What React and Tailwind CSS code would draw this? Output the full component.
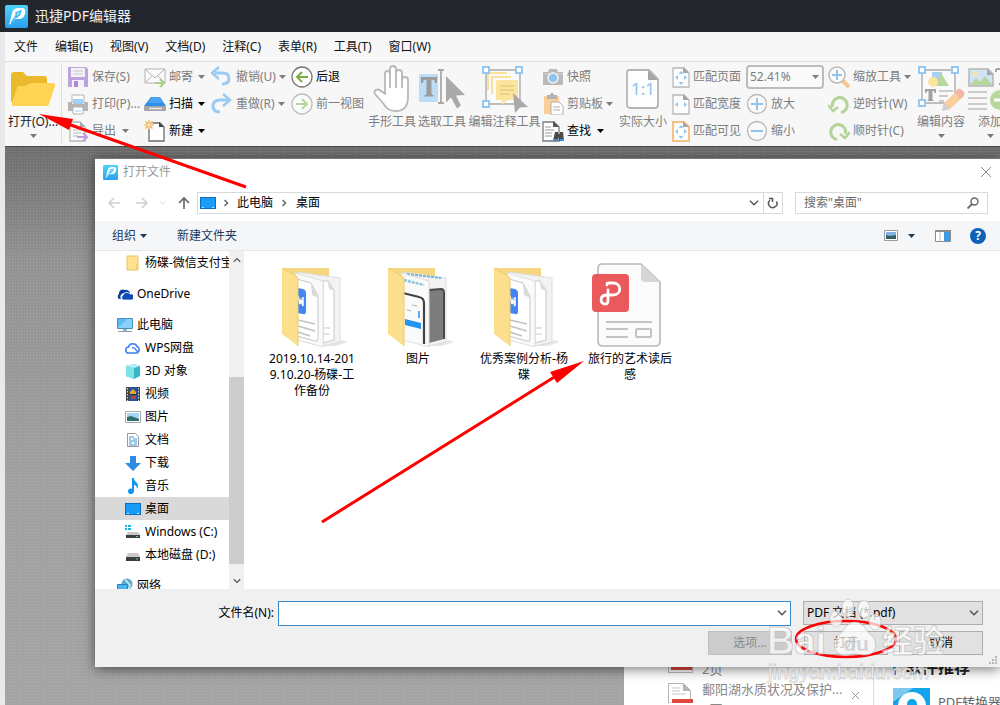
import React from "react";

const Caret = ({ className = "" }) => (
  <svg className={`shrink-0 ${className}`} width="7" height="4" viewBox="0 0 7 4" aria-hidden="true">
    <path d="M0 0h7L3.500 4z" fill="currentColor" />
  </svg>
);

const Chevron = ({ className = "" }) => (
  <svg className={className} width="10" height="6" viewBox="0 0 10 6" fill="none" stroke="currentColor" strokeWidth="1.5" aria-hidden="true">
    <path d="M1 .8l4 4 4-4" />
  </svg>
);

const Svg = ({ w = 22, h = 22, children }) => (
  <svg className="shrink-0" width={w} height={h} viewBox={`0 0 ${w} ${h}`} fill="none" aria-hidden="true">
    {children}
  </svg>
);

/* ---------- toolbar icons ---------- */

const LogoIcon = ({ size = 23 }) => (
  <svg className="shrink-0" width={size} height={size} viewBox="0 0 23 23" aria-hidden="true">
    <defs>
      <linearGradient id="logo" x1="0" y1="0" x2="0" y2="1">
        <stop offset="0" stopColor="#4fd3f7" />
        <stop offset="1" stopColor="#2a9ff0" />
      </linearGradient>
    </defs>
    <rect width="23" height="23" rx="2" fill="url(#logo)" />
    <path d="M4 20L7 8c1-3.500 3-5 6-5h3c4 0 5 2 4 5.500-1 4-3 5.500-6.500 5.500H10c-1.500 0-1.500 3-6 6z" fill="#fff" />
    <path d="M6 18l6-9M11 7.500l5-1.500-1.500 4-3.500 2.500z" stroke="#35b4f3" strokeWidth="1.200" fill="#9adff9" />
  </svg>
);

const OpenFolder = () => (
  <Svg w={46} h={38}>
    <path d="M1 5a3 3 0 013-3h9l4 4h17a3 3 0 013 3v24H4a3 3 0 01-3-3z" fill="#ebb92c" />
    <path d="M9 16h6l6-3h22c2 0 2.500 1 2 3l-6 18c-.5 1.500-1 2-3 2H4c-2 0-2.500-1-2-3l5-15c.5-1.500 1-2 2-2z" fill="#ffd454" />
  </Svg>
);

const SaveIcon = () => (
  <Svg>
    <path d="M1 1h18l2 2v18H1z" fill="#bda3de" />
    <path d="M4 2h14v9H4zM5 14h12v7H5z" fill="#f5f2fa" />
    <path d="M6 5h10M6 8h10" stroke="#c9c9c9" />
    <path d="M7 15h4v6H7z" fill="#a98ad1" />
  </Svg>
);

const PrintIcon = () => (
  <Svg>
    <path d="M5 2h12v7H5z" fill="#fff" stroke="#b4b4b4" />
    <path d="M6 6h10v5H6z" fill="#9fd0f5" />
    <path d="M1 9h4v2h12V9h4v9H1z" fill="#b5b5b5" />
    <path d="M6 14h10v7H6z" fill="#fff" stroke="#b4b4b4" />
    <path d="M8 18h6" stroke="#9fd0f5" />
  </Svg>
);

const ExportIcon = () => (
  <Svg>
    <path d="M3 2h10l5 5v14H3z" fill="#fbfbfb" stroke="#b8b8b8" strokeWidth="1.300" />
    <path d="M13 2v5h5z" fill="#a5a5a5" />
    <path d="M6 10h8M6 13h8M6 16h5" stroke="#b8b8b8" />
    <path d="M10 17h10m-4-4l4 4-4 4" stroke="#b99fdb" strokeWidth="2" />
  </Svg>
);

const MailIcon = () => (
  <Svg>
    <path d="M1 3h20v14H1z" fill="#fafafa" stroke="#b3b3b3" />
    <path d="M1 3l10 9L21 3M1 17l7-7M21 17l-7-7" stroke="#b3b3b3" />
    <path d="M11 17h9m-4-4l4 4-4 4" stroke="#a9d18e" strokeWidth="2" />
  </Svg>
);

const ScanIcon = () => (
  <Svg>
    <path d="M7 4h9l6 9H0z" fill="#2f8ee6" />
    <path d="M8 4h7l4 6H4z" fill="#49a6f5" />
    <rect x="0" y="13" width="22" height="5" rx="1" fill="#a5a5a5" />
    <path d="M5 15.500h13" stroke="#e9e9e9" strokeWidth="1.500" />
  </Svg>
);

const NewIcon = () => (
  <Svg>
    <path d="M5 3h11l4 4v14H5z" fill="#fff" stroke="#6b6b6b" strokeWidth="1.300" />
    <path d="M15 2l5 5h-5z" fill="#444" />
    <circle cx="5" cy="5" r="4" fill="#f7f7f7" />
    <path d="M5 0v10M0 5h10M1.500 1.500l7 7M8.500 1.500l-7 7" stroke="#f3a93b" strokeWidth="1.200" />
    <circle cx="5" cy="5" r="1.500" fill="#f7f7f7" />
  </Svg>
);

const UndoIcon = () => (
  <Svg>
    <path d="M4 7h8q6 0 6 5.500T11 18" stroke="#9ccbf2" strokeWidth="3" />
    <path d="M8 1L1 7l7 6" stroke="#9ccbf2" strokeWidth="2.600" />
  </Svg>
);

const RedoIcon = () => (
  <Svg>
    <path d="M17 7H9q-7 0-7 6t7 6" stroke="#9ccbf2" strokeWidth="3" />
    <path d="M12 1l7 6-7 6" stroke="#9ccbf2" strokeWidth="2.600" />
  </Svg>
);

const BackIcon = () => (
  <Svg>
    <circle cx="11" cy="11" r="10" fill="#fff" stroke="#787878" strokeWidth="1.300" />
    <path d="M17 11H7m4-5l-5 5 5 5" stroke="#76b043" strokeWidth="2" />
  </Svg>
);

const ForwardIcon = () => (
  <Svg>
    <circle cx="11" cy="11" r="10" fill="#fbfbfb" stroke="#bdbdbd" strokeWidth="1.300" />
    <path d="M5 11h10m-4-5l5 5-5 5" stroke="#b5d69a" strokeWidth="2" />
  </Svg>
);

const HandIcon = () => (
  <Svg w={38} h={48}>
    <path
      d="M12 29V9c0-4 5-4 5 0V4c0-4 6-4 6 0v4c0-4 6-4 6 0v7c0-4 6-4 6 0v17c0 10-4 14-12 14-7 0-10-3-13-8L2 29c-2-4 3-6 6-3z"
      fill="#fff" stroke="#b8b8b8" strokeWidth="1.800" strokeLinejoin="round"
    />
    <path d="M17 8v15M23 6v17M29 9v14" stroke="#b8b8b8" strokeWidth="1.800" />
  </Svg>
);

const SelectToolIcon = () => (
  <Svg w={48} h={42}>
    <rect x="1" y="6" width="19" height="28" rx="1" fill="#bddcf5" />
    <path d="M3 9h16v6h-2c0-2.500-1-3.500-3.500-3.500V25c0 1.500.5 2 2 2v1.500h-9V27c1.500 0 2-.5 2-2V11.500C6 11.500 5 12.500 5 15H3z" fill="#9b9b9b" />
    <path d="M20 2h6M20 35h6M23 2v33" stroke="#a8a8a8" strokeWidth="1.800" />
    <path d="M28 8l19 19-9 .5 5 10-4 3-6-11-5 5z" fill="#a9a9a9" />
  </Svg>
);

const CommentToolIcon = () => (
  <Svg w={48} h={48}>
    <path d="M5 5h34v34H5z" fill="#fafafa" stroke="#bdbdbd" strokeWidth="1.800" />
    <path d="M7 25V8h19M11 29V12h19" stroke="#fbe09b" strokeWidth="2" />
    <path d="M15 15h22v20H26l-5 5v-5h-6z" fill="#fbe3a0" />
    <path d="M19 21h14M19 25h14M19 29h10" stroke="#e3bf66" />
    <path d="M2 2h6v6H2zM35 2h6v6h-6zM2 36h6v6H2z" fill="#fff" stroke="#93c8f2" strokeWidth="2" />
    <path d="M32 28l15 14-8 .5-5 5.500z" fill="#a9a9a9" />
  </Svg>
);

const CameraIcon = () => (
  <Svg>
    <path d="M1 6h5l1-3h8l1 3h5v13H1z" fill="#b9b9b9" />
    <path d="M1 8h20" stroke="#d6d6d6" />
    <circle cx="11" cy="12" r="5" fill="#8fc4f0" stroke="#f3f3f3" strokeWidth="1.500" />
  </Svg>
);

const ClipboardIcon = () => (
  <Svg>
    <path d="M2 3h15v18H2z" fill="#f9cf97" />
    <path d="M5 2h3a2 2 0 014 0h3v4H5z" fill="#b3b3b3" />
    <path d="M9 9h8l4 4v9H9z" fill="#fdfdfd" stroke="#b3b3b3" />
    <path d="M11 14h7M11 17h7" stroke="#b3b3b3" />
  </Svg>
);

const FindIcon = () => (
  <Svg>
    <path d="M1 2h11l5 5v14H1z" fill="#fff" stroke="#7a7a7a" strokeWidth="1.300" />
    <path d="M11 1l6 6h-6z" fill="#555" />
    <path d="M3 7h6M3 10h9M3 13h7M3 16h7" stroke="#9a9a9a" />
    <path d="M13 12h3v2h2v-2h3l1 9h-5v-3h-1v3h-5z" fill="#4a4a4a" />
    <path d="M11 20h5M18 20h4" stroke="#3b8ed8" strokeWidth="2" />
  </Svg>
);

const ActualSizeIcon = () => (
  <Svg w={34} h={42}>
    <path d="M3 2h20l9 9v26a3 3 0 01-3 3H4a3 3 0 01-3-3V4a2 2 0 012-2z" fill="#fdfdfd" stroke="#b5b5b5" strokeWidth="1.800" />
    <path d="M22 2l10 10H22z" fill="#a5a5a5" />
    <text x="17" y="27" textAnchor="middle" fontSize="17" fontFamily="Noto Sans" fill="#8ec3ee">1:1</text>
  </Svg>
);

const FitIcon = ({ kind }) => (
  <Svg w={18} h={22}>
    <path d="M1 2h11l5 5v14H1z" fill="#fdfdfd" stroke={kind === "visible" ? "#f5c283" : "#b8b8b8"} strokeWidth={kind === "visible" ? 2 : 1.3} />
    <path d="M11 1l6 6h-6z" fill="#a5a5a5" />
    <path d="M6 9l-3 2.500L6 14zM12 9l3 2.500-3 2.500z" fill="#93c8f2" />
    {kind !== "width" && <path d="M6.500 8L9 5l2.500 3zM6.500 16L9 19l2.500-3z" fill="#93c8f2" />}
  </Svg>
);

const PlusMinus = ({ plus }) => (
  <Svg>
    <circle cx="11" cy="11" r="9.500" fill="#f9f9f9" stroke="#b9b9b9" strokeWidth="1.300" />
    <path d={plus ? "M5 11h12M11 5v12" : "M5 11h12"} stroke="#93c3ea" strokeWidth="2" />
  </Svg>
);

const ZoomToolIcon = () => (
  <Svg>
    <path d="M15 15l6 6" stroke="#f7c88c" strokeWidth="4" />
    <circle cx="9" cy="9" r="8" fill="#fbfbfb" stroke="#b9b9b9" strokeWidth="1.500" />
    <path d="M4 9h10M9 4v10" stroke="#93c3ea" strokeWidth="2" />
  </Svg>
);

const RotateIcon = ({ flip }) => (
  <Svg>
    <g transform={flip ? "translate(22 0) scale(-1 1)" : undefined}>
      <path d="M13 19.500a7.500 7.500 0 10-8.500-5.500" stroke="#b3d496" strokeWidth="3" />
      <path d="M0 12l5 6 5-4" stroke="#b3d496" strokeWidth="2.600" />
    </g>
  </Svg>
);

const EditContentIcon = () => (
  <Svg w={48} h={48}>
    <path d="M5 5h33v33H5z" fill="#fafafa" stroke="#bdbdbd" strokeWidth="1.800" />
    <path d="M15 7h10v11H15z" fill="#a9d1f2" />
    <path d="M24 8l8 13H18z" fill="#b7d79c" />
    <circle cx="16" cy="17" r="5" fill="#fbe3a0" />
    <path d="M8 24h11v4h-1.500c0-1.500-.5-2-2-2v8c0 1 .5 1.500 1.500 1.500v.5h-7v-.500c1 0 1.500-.5 1.500-1.500v-8c-1.500 0-2 .5-2 2H8z" fill="#a2a2a2" />
    <path d="M22 26h14M22 31h9M22 36h5" stroke="#bdbdbd" strokeWidth="1.500" />
    <path d="M2 2h6v6H2zM35 2h6v6h-6zM2 35h6v6H2z" fill="#fff" stroke="#93c8f2" strokeWidth="2" />
    <path d="M25 46l2-8 14-13 6 6-14 13z" fill="#f8cf9d" />
    <path d="M38 27l3-3q2-1 4 1l2 2q1 2-.5 4L43 34z" fill="#f4b3a6" />
    <path d="M25 46l2-8 6 6z" fill="#cfcfcf" />
  </Svg>
);

const AddIcon = () => (
  <Svg w={44} h={44}>
    <path d="M1 2h19l5 5v12H1z" fill="#cfe5f6" stroke="#b5b5b5" strokeWidth="1.500" />
    <path d="M2 18l6-7 4 4 5-6 7 9z" fill="#b7d79c" />
    <circle cx="7" cy="7" r="2.500" fill="#fbe3a0" />
    <path d="M19 2l6 6h-6z" fill="#a5a5a5" />
    <path d="M28 2h10M28 2v3M31 17h6" stroke="#a5a5a5" strokeWidth="2" />
    <path d="M0 25h19M0 31h19M0 37h19M0 42h19" stroke="#bdbdbd" strokeWidth="1.500" />
    <circle cx="32" cy="33" r="10" fill="#b7d79c" />
    <path d="M26 33h12" stroke="#fff" strokeWidth="3" />
  </Svg>
);

function Tool({ icon, label, caret, near, active }) {
  return (
    <button
      type="button"
      className={`flex h-[27px] w-full items-center gap-[3px] text-left whitespace-nowrap ${active ? "text-black" : "text-[#7d7d7d]"}`}
    >
      {icon}
      <span>{label}</span>
      {caret && <Caret className={near ? "ml-[3px]" : "mr-[6px] ml-auto"} />}
    </button>
  );
}

function BigTool({ icon, label, caret, active, className }) {
  return (
    <button
      type="button"
      className={`flex shrink-0 flex-col items-center whitespace-nowrap ${active ? "text-[#222]" : "text-[#7d7d7d]"} ${className}`}
    >
      <span className="flex h-[51px] items-center">{icon}</span>
      <span className="leading-4">{label}</span>
      {caret && <Caret className="mt-1 text-[#777]" />}
    </button>
  );
}

const Column = ({ className, children }) => <div className={`flex shrink-0 flex-col ${className}`}>{children}</div>;

const menus = ["文件", "编辑(E)", "视图(V)", "文档(D)", "注释(C)", "表单(R)", "工具(T)", "窗口(W)"];

function Toolbar() {
  return (
    <div className="flex h-[85px] overflow-hidden border-b border-[#4a4a4a] bg-[#f7f7f7] pt-px">
      <div className="mb-[3px] flex shrink-0 border-r border-[#dedede]">
        <BigTool active caret className="w-14" icon={<OpenFolder />} label="打开(O)..." />
      </div>
      <Column className="w-[82px] pl-[5px]">
        <Tool icon={<SaveIcon />} label="保存(S)" />
        <Tool icon={<PrintIcon />} label="打印(P)..." />
        <Tool icon={<ExportIcon />} label="导出" caret near />
      </Column>
      <Column className="w-[67px]">
        <Tool icon={<MailIcon />} label="邮寄" caret />
        <Tool active icon={<ScanIcon />} label="扫描" caret />
        <Tool active icon={<NewIcon />} label="新建" caret />
      </Column>
      <Column className="w-[80px]">
        <Tool icon={<UndoIcon />} label="撤销(U)" caret />
        <Tool icon={<RedoIcon />} label="重做(R)" caret />
      </Column>
      <Column className="w-[76px]">
        <Tool active icon={<BackIcon />} label="后退" />
        <Tool icon={<ForwardIcon />} label="前一视图" />
      </Column>
      <BigTool className="w-[50px]" icon={<HandIcon />} label="手形工具" />
      <BigTool className="w-[50px]" icon={<SelectToolIcon />} label="选取工具" />
      <BigTool className="w-[75px]" icon={<CommentToolIcon />} label="编辑注释工具" />
      <Column className="w-[76px]">
        <Tool icon={<CameraIcon />} label="快照" />
        <Tool icon={<ClipboardIcon />} label="剪贴板" caret />
        <Tool active icon={<FindIcon />} label="查找" caret near />
      </Column>
      <BigTool className="w-[50px]" icon={<ActualSizeIcon />} label="实际大小" />
      <Column className="w-[78px] pl-1">
        <Tool icon={<FitIcon kind="page" />} label="匹配页面" />
        <Tool icon={<FitIcon kind="width" />} label="匹配宽度" />
        <Tool icon={<FitIcon kind="visible" />} label="匹配可见" />
      </Column>
      <Column className="w-[82px]">
        <label className="relative flex h-[27px] w-[78px] items-center text-[#7d7d7d]">
          <select aria-label="缩放比例" className="h-6 w-full appearance-none rounded-sm border-2 border-[#bcbcbc] bg-[#fafafa] pl-[2px]">
            <option>52.41%</option>
          </select>
          <Caret className="pointer-events-none absolute right-[5px]" />
        </label>
        <Tool icon={<PlusMinus plus />} label="放大" />
        <Tool icon={<PlusMinus />} label="缩小" />
      </Column>
      <Column className="w-[88px]">
        <Tool icon={<ZoomToolIcon />} label="缩放工具" caret />
        <Tool icon={<RotateIcon />} label="逆时针(W)" />
        <Tool icon={<RotateIcon flip />} label="顺时针(C)" />
      </Column>
      <BigTool caret className="w-[50px]" icon={<EditContentIcon />} label="编辑内容" />
      <BigTool caret className="w-12" icon={<AddIcon />} label="添加" />
    </div>
  );
}

/* ---------- dialog icons ---------- */

const DesktopIcon = () => (
  <Svg w={16} h={14}>
    <rect x=".5" y="1.500" width="15" height="11" fill="#1a9bf7" stroke="#0c6fc0" />
    <path d="M2 11.500h2M12 11.500h2" stroke="#bfe4ff" />
  </Svg>
);

const treeIcons = {
  folder: (
    <Svg w={16} h={16}>
      <path d="M2 1h11v14H2z" fill="#ffe293" stroke="#e9c45c" />
      <path d="M11 9h2v6h-2z" fill="#f4d06b" />
    </Svg>
  ),
  onedrive: (
    <Svg w={16} h={16}>
      <path d="M2 13a3 3 0 010-5 4 4 0 016-4 4 4 0 015 3H8a4 4 0 00-4 6z" fill="#0b3f9e" />
      <path d="M6 14a3 3 0 010-5 4 4 0 017-1 3 3 0 012 6z" fill="#1149b5" stroke="#fff" strokeWidth=".8" />
    </Svg>
  ),
  pc: (
    <Svg w={16} h={16}>
      <path d="M.5 1.500h15v10H.5z" fill="#5cbcf2" stroke="#4b90bd" />
      <path d="M1 11l9-9h5v9z" fill="#86d2fa" />
      <path d="M6 12h4v2H6z" fill="#9db4c3" />
      <path d="M1 14.500h14" stroke="#8aa2b3" />
    </Svg>
  ),
  cloud: (
    <Svg w={16} h={16}>
      <path d="M4 13a3 3 0 01-.5-6 4.500 4.500 0 018.500-.5A3.500 3.500 0 0112 13H4" stroke="#3a7ff2" strokeWidth="1.600" />
      <path d="M7 8c2-1 3 0 4 2l2 2" stroke="#3a7ff2" strokeWidth="1.400" />
    </Svg>
  ),
  cube: (
    <Svg w={16} h={16}>
      <path d="M1 3l8-2 6 2v10l-6 3-8-3z" fill="#37b6c9" />
      <path d="M1 3l8 2v11l-8-3z" fill="#7fe3e8" />
      <path d="M1 3l8-2 6 2-6 2z" fill="#b6f1f3" />
    </Svg>
  ),
  video: (
    <Svg w={16} h={16}>
      <path d="M1 1h14v14H1z" fill="#444" />
      <path d="M4 1h8v14H4z" fill="#27549e" />
      <path d="M5 6l3-3 3 3v2H5z" fill="#e8a72f" />
      <path d="M6 10h5v3H6z" fill="#c2442f" />
      <path d="M4 8.500h8" stroke="#333" />
      <path d="M2.500 2v13M13.500 2v13" stroke="#ddd" strokeDasharray="1.500 1.500" />
    </Svg>
  ),
  picture: (
    <Svg w={16} h={16}>
      <path d="M.5 2.500h15v11H.5z" fill="#fff" stroke="#a9a9a9" />
      <path d="M2 4h12v8H2z" fill="#a7d5f5" />
      <path d="M2 8l4-1 8 3v2H2z" fill="#2f6e6b" />
    </Svg>
  ),
  doc: (
    <Svg w={16} h={16}>
      <path d="M2.500 1.500h8l3 3v10h-11z" fill="#fff" stroke="#9a9a9a" />
      <path d="M4 5h5M4 7h2M8 7h4M4 9h8M4 11h3M9 11h3M4 13h8" stroke="#3f95d0" />
    </Svg>
  ),
  download: (
    <Svg w={16} h={16}>
      <path d="M5 1h6v7h5l-8 8-8-8h5z" fill="#2f8be0" />
    </Svg>
  ),
  music: (
    <Svg w={16} h={16}>
      <path d="M7 0h2c0 4 4 4 4 8 0 1-.5 2-1 3 0-3-1.500-4-3-4v6c0 4-6 4-6 .5C3 11 5 10 7 11z" fill="#1296f0" />
    </Svg>
  ),
  desktop: <DesktopIcon />,
  drivec: (
    <Svg w={16} h={16}>
      <path d="M0 1h2v2H0zM3 1h3v2H3zM0 4h2v2H0zM3 4h3v2H3z" fill="#19b0f0" />
      <path d="M3 8h10l2 3H1z" fill="#c9c9c9" />
      <path d="M1 11h14v3H1z" fill="#3d3d3d" />
      <path d="M11 12.500h2" stroke="#4fe04f" />
    </Svg>
  ),
  drive: (
    <Svg w={16} h={16}>
      <path d="M3 6h10l2 4H1z" fill="#c9c9c9" />
      <path d="M1 10h14v4H1z" fill="#3d3d3d" />
      <path d="M11 12h2" stroke="#4fe04f" />
    </Svg>
  ),
  network: (
    <Svg w={16} h={16}>
      <circle cx="10" cy="6" r="5.500" fill="#5fa9cc" />
      <path d="M8 2c3 1 2 3 4 4s0 4-1 5" stroke="#d5eef5" strokeWidth="1.500" />
      <path d="M.5 6.500h10v7H.5z" fill="#4db5f0" stroke="#2b7fb8" />
    </Svg>
  ),
};

const tree = [
  [{ icon: "folder", label: "杨碟-微信支付宝", child: true }],
  [{ icon: "onedrive", label: "OneDrive" }],
  [
    { icon: "pc", label: "此电脑" },
    { icon: "cloud", label: "WPS网盘", child: true },
    { icon: "cube", label: "3D 对象", child: true },
    { icon: "video", label: "视频", child: true },
    { icon: "picture", label: "图片", child: true },
    { icon: "doc", label: "文档", child: true },
    { icon: "download", label: "下载", child: true },
    { icon: "music", label: "音乐", child: true },
    { icon: "desktop", label: "桌面", child: true, selected: true },
    { icon: "drivec", label: "Windows (C:)", child: true },
    { icon: "drive", label: "本地磁盘 (D:)", child: true },
  ],
  [{ icon: "network", label: "网络" }],
];

const FolderArt = ({ phones }) => (
  <Svg w={70} h={84}>
    <path d="M46 83l20-6 5 2-12 4z" fill="#e6e6e6" />
    <path d="M5 5h47v70H10z" fill="#f5d681" />
    <path d="M20 9l43 6v64l-17 4-20-6z" fill="#f3f3f3" stroke="#dcdcdc" />
    {phones ? (
      <>
        <path d="M46 27l12-1q3 0 3 4v46l-15 4z" fill="#7d7d7d" />
        <path d="M46 27l12-1q3 0 3 4v46" stroke="#4b4b4b" strokeWidth="2" />
        <path d="M24 11l34 4" stroke="#6fb7d4" strokeWidth="2" strokeDasharray="3 1" />
      </>
    ) : (
      <>
        <path d="M46 18h5l6 9v50l-11 3z" fill="#fff" stroke="#c9c9c9" />
        <path d="M50 15l8 13-6-2z" fill="#dcdcdc" />
        <path d="M46 65h7M46 71h7" stroke="#c9c9c9" />
      </>
    )}
    <path d="M18 10l28 8v66l-26-7z" fill="#fafafa" stroke="#dedede" />
    {phones ? (
      <>
        <path d="M21 17l20 5" stroke="#8cc6dd" strokeWidth="2.500" strokeDasharray="3 1" />
        <path d="M20 30l16 4q5 1 5 6v41" stroke="#424242" strokeWidth="2.200" />
        <path d="M22 56l16 4v6l-16-4z" fill="#2493f0" />
        <path d="M29 42l5 1M24 47l4 1" stroke="#b0b0b0" />
        <path d="M36 48v7" stroke="#2493f0" strokeWidth="1.500" />
      </>
    ) : (
      <>
        <path d="M20 16l14 4 7 13v43q0 3-3 2l-18-5z" fill="#fff" stroke="#c6c6c6" />
        <path d="M34 20l7 15-6-3z" fill="#dadada" />
        <path d="M20 25l6 1q3 1 3 4v18q0 4-3 3l-6-1z" fill="#4285f4" />
        <path d="M21 33l2 8 1-4 2 6V34" stroke="#fff" strokeWidth="1.500" />
        <path d="M21 57l17 4M21 63l17 5M21 69l12 4" stroke="#c2c2c2" strokeWidth="1.500" />
      </>
    )}
    <path d="M5 5l14 8q2 1 2 4v66L5 71z" fill="#fbdf8d" />
    <path d="M5 5l14 8q2 1 2 4v66" stroke="#efcc6d" />
  </Svg>
);

const PdfArt = () => (
  <Svg w={80} h={84}>
    <path d="M12 1h39l19 18v59q0 5-5 5H13q-5 0-5-5V5q0-4 4-4z" fill="#fbfbfb" stroke="#b9b9b9" strokeWidth="1.600" />
    <path d="M51 1l19 18H55q-4 0-4-4z" fill="#d6d6d6" />
    <rect x="2" y="11" width="37" height="38" rx="4" fill="#ea5a5c" />
    <path
      d="M17 22v-1c0-1 .5-1 2-1h4c9 0 9 12 0 12h-6c-8 0-7 9-2 9 3 0 3-2 3-5v-9"
      stroke="#fff" strokeWidth="2.800" strokeLinecap="round"
    />
    <path d="M16 59h46M16 66h22M16 74h22" stroke="#c4c4c4" strokeWidth="2" />
    <rect x="46" y="66" width="15" height="8" rx="1" stroke="#c4c4c4" strokeWidth="2" />
  </Svg>
);

const files = [
  { name: "2019.10.14-2019.10.20-杨碟-工作备份", art: <FolderArt /> },
  { name: "图片", art: <FolderArt phones /> },
  { name: "优秀案例分析-杨碟", art: <FolderArt /> },
  { name: "旅行的艺术读后感", art: <PdfArt /> },
];

const Arrow = ({ d, className }) => (
  <svg className={className} width="14" height="14" viewBox="0 0 14 14" fill="none" stroke="currentColor" strokeWidth="1.600" aria-hidden="true">
    <path d={d} />
  </svg>
);

function FileDialog() {
  return (
    <section
      role="dialog"
      aria-label="打开文件"
      className="absolute top-[11px] right-0 left-[90px] flex flex-col border-t border-[#777] bg-white text-black shadow-[0_2px_12px_rgba(0,0,0,0.55)]"
    >
      <header className="flex h-[26px] items-center pr-2 pl-2">
        <LogoIcon size={15} />
        <h1 className="ml-[5px] flex-1 text-[#999]">打开文件</h1>
        <button type="button" aria-label="关闭">
          <svg width="12" height="12" viewBox="0 0 12 12" stroke="#8d8d8d" aria-hidden="true">
            <path d="M1 1l10 10M11 1L1 11" />
          </svg>
        </button>
      </header>

      <div className="flex h-9 items-center pr-3 pl-3">
        <button type="button" aria-label="后退" className="text-[#d0d0d0]"><Arrow d="M13 7H2m5-5L2 7l5 5" /></button>
        <button type="button" aria-label="前进" className="ml-[14px] text-[#d0d0d0]"><Arrow d="M1 7h11M7 2l5 5-5 5" /></button>
        <button type="button" aria-label="最近的位置" className="ml-[10px] text-[#d6d6d6]"><Chevron className="h-1 w-2" /></button>
        <button type="button" aria-label="上移" className="ml-[10px] text-[#666]"><Arrow d="M7 13V2M2 7l5-5 5 5" /></button>
        <div className="ml-[6px] flex h-[22px] flex-1 items-center border border-[#d9d9d9] pl-[2px]">
          <DesktopIcon />
          <svg className="mx-2" width="5" height="8" viewBox="0 0 5 8" fill="none" stroke="#666" aria-hidden="true"><path d="M.5 1l3 3-3 3" strokeWidth="1.500" /></svg>
          <button type="button">此电脑</button>
          <svg className="mx-[9px]" width="5" height="8" viewBox="0 0 5 8" fill="none" stroke="#666" aria-hidden="true"><path d="M.5 1l3 3-3 3" strokeWidth="1.500" /></svg>
          <button type="button">桌面</button>
          <button type="button" aria-label="历史记录" className="mr-1 ml-auto text-[#555]"><Chevron /></button>
          <button type="button" aria-label="刷新" className="flex h-full w-[19px] items-center justify-center border-l border-[#d9d9d9]">
            <svg width="12" height="12" viewBox="0 0 12 12" fill="none" stroke="#555" strokeWidth="1.500" aria-hidden="true">
              <path d="M9.500 4.500A4.200 4.200 0 113 3.200" />
              <path d="M2 1.500h3.500V5" />
            </svg>
          </button>
        </div>
        <div className="ml-3 flex h-[22px] w-[193px] items-center border border-[#d9d9d9] px-2">
          <input aria-label="搜索" placeholder={'搜索"桌面"'} className="min-w-0 flex-1 bg-transparent outline-none placeholder:text-[#6b6b6b]" />
          <svg width="12" height="12" viewBox="0 0 12 12" fill="none" stroke="#666" strokeWidth="1.400" aria-hidden="true">
            <circle cx="7.500" cy="4.500" r="3.500" />
            <path d="M5 7l-4.500 4.500" strokeWidth="1.800" />
          </svg>
        </div>
      </div>

      <div className="flex h-[30px] items-center border-b border-[#e6e8ea] bg-[#f4f6f8] pr-[14px] pl-[17px] text-[#1e395b]">
        <button type="button" className="flex items-center gap-1">组织<Caret /></button>
        <button type="button" className="ml-[30px]">新建文件夹</button>
        <button type="button" aria-label="更改视图" className="ml-auto flex items-center gap-[10px]">
          <svg width="14" height="12" viewBox="0 0 14 12" aria-hidden="true">
            <path d="M.5.500h13v10H.5z" fill="#fff" stroke="#9a9a9a" />
            <path d="M2 2h10v4H2z" fill="#7fb6ea" />
            <path d="M2 5l4 1 6-1v4H2z" fill="#35605d" />
          </svg>
          <Caret />
        </button>
        <button type="button" aria-label="预览窗格" className="ml-5">
          <svg width="16" height="12" viewBox="0 0 16 12" aria-hidden="true">
            <path d="M.5.500h15v11H.5z" fill="#fff" stroke="#8b8b8b" />
            <path d="M0 0h16v2H0z" fill="#8b8b8b" />
            <path d="M5 2v9" stroke="#bbb" />
            <path d="M9 2h6v9H9z" fill="#3e9ae6" />
          </svg>
        </button>
        <button type="button" aria-label="帮助" className="ml-[19px] flex size-4 items-center justify-center rounded-full bg-[#0e63b8] font-bold text-white">?</button>
      </div>

      <div className="flex h-[338px]">
        <nav aria-label="位置" className="flex w-[134px] shrink-0 flex-col gap-2 overflow-hidden">
          {tree.map((group, i) => (
            <ul key={i} className="shrink-0">
              {group.map((node) => (
                <li key={node.label}>
                  <button
                    type="button"
                    className={`flex h-[23px] w-full items-center gap-1 overflow-hidden whitespace-nowrap ${node.child ? "pl-[30px]" : "pl-[22px]"} ${node.selected ? "bg-[#d9d9d9]" : ""}`}
                  >
                    {treeIcons[node.icon]}
                    <span>{node.label}</span>
                  </button>
                </li>
              ))}
            </ul>
          ))}
        </nav>
        <div className="flex w-[15px] shrink-0 flex-col items-center bg-[#f0f0f0] text-[#555]" aria-hidden="true">
          <div className="flex h-[17px] items-center"><Chevron className="w-2 rotate-180" /></div>
          <div className="mt-[109px] w-full flex-1 bg-[#cdcdcd]" />
          <div className="mt-2 flex h-[17px] items-center"><Chevron className="w-2" /></div>
        </div>
        <ul className="flex flex-1 pt-3 pl-[15px]">
          {files.map((file) => (
            <li key={file.name}>
              <button type="button" className="flex w-[106px] flex-col items-center gap-1">
                {file.art}
                <span className="w-[90px] text-center leading-4 break-all">{file.name}</span>
              </button>
            </li>
          ))}
        </ul>
      </div>

      <footer className="relative flex flex-col gap-[6px] bg-[#f0f0f0] pt-3 pr-[17px] pb-3">
        <div className="flex h-6 items-center gap-3">
          <label htmlFor="filename" className="w-[179px] shrink-0 text-right">文件名(N):</label>
          <div className="relative -ml-2 flex flex-1 items-center">
            <input id="filename" className="h-[25px] w-full border border-[#3c8ccb] bg-white px-1 outline-none" />
            <Chevron className="pointer-events-none absolute right-1 text-[#555]" />
          </div>
          <div className="relative flex w-[180px] items-center">
            <select aria-label="文件类型" className="h-6 w-full appearance-none border border-[#adadad] bg-[#e1e1e1] pl-[3px]">
              <option>PDF 文档 (*.pdf)</option>
            </select>
            <Chevron className="pointer-events-none absolute right-1 text-[#555]" />
          </div>
        </div>
        <div className="flex justify-end">
          <button type="button" disabled className="h-6 w-[84px] border border-[#bfbfbf] bg-[#cccccc] text-[#8a8a8a]">选项...</button>
          <button type="button" className="ml-3 h-6 w-[84px] border border-[#adadad] bg-[#e1e1e1]">打开</button>
          <button type="button" className="ml-[11px] h-6 w-[84px] border border-[#adadad] bg-[#e1e1e1]">取消</button>
        </div>
        <svg className="absolute right-[2px] bottom-[2px]" width="9" height="9" viewBox="0 0 9 9" fill="#b5b5b5" aria-hidden="true">
          <path d="M6 0h2v2H6zM3 3h2v2H3zM6 3h2v2H6zM0 6h2v2H0zM3 6h2v2H3zM6 6h2v2H6z" />
        </svg>
      </footer>
    </section>
  );
}

function StartPanel() {
  return (
    <aside className="flex h-[50px] w-[376px] overflow-hidden bg-white text-[13px] text-[#8a8a8a]">
      <ul className="flex w-[250px] shrink-0 flex-col border-r border-[#dcdcdc] pl-11">
        <li className="flex h-7 items-start gap-[9px]">
          <svg width="25" height="18" viewBox="0 0 25 18" aria-hidden="true">
            <path d="M.5 0v17.500h24V0" fill="#fff" stroke="#bbb" />
            <path d="M3 9h21v6H3z" fill="#e0473f" />
          </svg>
          <span className="pt-1 leading-5">2页</span>
        </li>
        <li className="flex items-start gap-[9px]">
          <svg width="25" height="24" viewBox="0 0 25 24" fill="none" aria-hidden="true">
            <path d="M.5 4.500h15l7 7V24H.5z" fill="#fff" stroke="#b5b5b5" />
            <path d="M15 4l8 8h-8z" fill="#b5b5b5" />
            <path d="M4 9h8M4 12h8M4 15h14" stroke="#c5c5c5" />
            <path d="M4 20h21v4H4z" fill="#e0473f" />
          </svg>
          <span className="leading-5 whitespace-nowrap">鄱阳湖水质状况及保护...<br />4页</span>
          <button type="button" aria-label="移除" className="mt-3">
            <svg width="9" height="9" viewBox="0 0 9 9" stroke="#999" aria-hidden="true"><path d="M1 1l7 7M8 1L1 8" /></svg>
          </button>
        </li>
      </ul>
      <div className="flex-1 pl-[19px]">
        <h2 className="flex h-[33px] items-start gap-[10px] text-base leading-6 font-bold whitespace-nowrap text-[#222]">
          <span className="h-5 w-[3px] bg-[#1a9be8]" />软件推荐
        </h2>
        <a href="#converter" className="flex items-start gap-2 text-[13px] leading-7 whitespace-nowrap text-[#666]">
          <svg className="shrink-0" width="37" height="37" viewBox="0 0 37 37" aria-hidden="true">
            <path d="M0 0h37v37H0z" fill="#12a5ea" />
            <path d="M0 0h20L0 14z" fill="#7cc8ee" />
            <circle cx="19" cy="18" r="14" fill="#fff" />
            <circle cx="19" cy="16" r="5" fill="#12a5ea" />
          </svg>
          PDF转换器
        </a>
      </div>
    </aside>
  );
}

/* Red guide marks and the site mark that lie over the window. */
function Annotations() {
  return (
    <svg className="pointer-events-none absolute top-0 left-0" width="1000" height="705" viewBox="0 0 1000 705" aria-hidden="true">
      <g stroke="#f00" strokeWidth="3" fill="none">
        <path d="M246 187L68 124M322 522L556 376" />
        <ellipse cx="846" cy="639" rx="50" ry="18" strokeWidth="2.500" />
      </g>
      <path d="M39 114l34 5-4 11zM584 361l-34 11 7 11z" fill="#f00" />
      <g fill="#fff" fillOpacity=".72" stroke="#b5b5b5" strokeOpacity=".6" strokeWidth="1" fontFamily="Liberation Sans, Noto Sans CJK SC, sans-serif">
        <ellipse cx="848" cy="608" rx="6" ry="9" />
        <ellipse cx="864" cy="609" rx="6" ry="9" />
        <ellipse cx="836" cy="619" rx="6" ry="8" />
        <ellipse cx="875" cy="622" rx="6" ry="8" />
        <path d="M855 622c8 0 10 8 16 13 7 6 7 20-6 20-4 0-6-1-10-1s-6 1-10 1c-13 0-13-14-6-20 6-5 8-13 16-13z" />
        <text x="767" y="654" fontSize="38" fontWeight="bold">Bai</text>
        <text x="882" y="652" fontSize="31" fontWeight="bold">经验</text>
        <text x="768" y="679" fontSize="20" strokeWidth=".8">jingyan.baidu.com</text>
      </g>
      <text x="856" y="651" textAnchor="middle" fontSize="21" fontWeight="bold" fontFamily="Liberation Sans, sans-serif" fill="#c4c4c4" fillOpacity=".7">du</text>
    </svg>
  );
}

export default function App() {
  return (
    <div className="relative flex h-screen w-full flex-col overflow-hidden bg-[#e9e9e9] font-['Noto_Sans','Noto_Sans_CJK_SC',sans-serif] text-xs">
      <header className="flex h-8 shrink-0 items-center gap-[7px] bg-[#24262e] pl-[5px] text-sm text-[#f1f1f1]">
        <LogoIcon />
        迅捷PDF编辑器
      </header>
      <div className="ml-[5px] flex min-h-0 flex-1 flex-col">
        <nav className="flex h-[30px] shrink-0 items-center gap-[17px] border-b border-[#dedede] bg-[#f7f7f7] pl-[9px] text-[#111]">
          {menus.map((m) => (
            <button key={m} type="button" className="whitespace-nowrap">{m}</button>
          ))}
        </nav>
        <Toolbar />
        <main className="relative flex flex-1 items-end justify-end bg-[radial-gradient(rgba(255,255,255,0.14)_1px,transparent_1px),linear-gradient(#6e6e6e,#929292_20%,#a0a0a0_60%,#a4a4a4)] bg-[size:3px_3px,100%_100%]">
          <StartPanel />
          <FileDialog />
        </main>
      </div>
      <Annotations />
    </div>
  );
}
